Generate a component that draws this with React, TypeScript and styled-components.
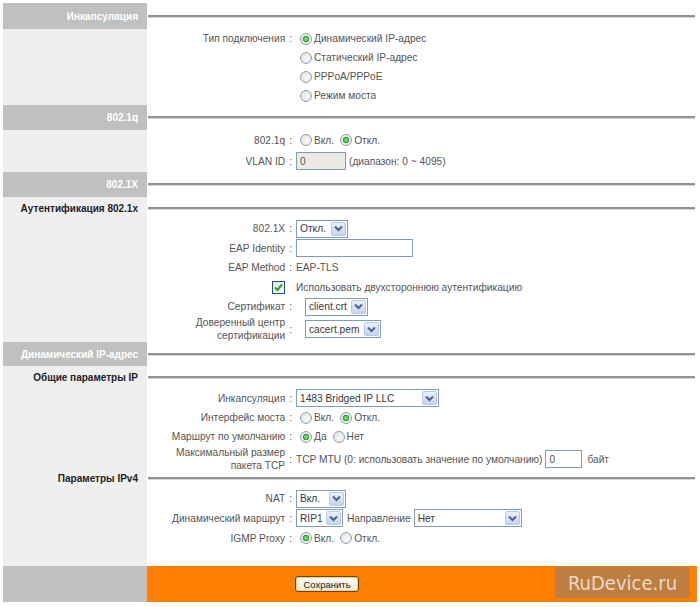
import React from "react";
import styled, { createGlobalStyle } from "styled-components";

const Global = createGlobalStyle`
  html, body { margin: 0; padding: 0; background: #ffffff; }
  body {
    font-family: "Liberation Sans", Arial, sans-serif;
    font-size: 10.2px;
    color: #555555;
  }
`;

const SIDE = 144;
const LABEL = 149;

const Page = styled.div`
  width: 694px;
  padding: 3px 3px 0 3px;
`;

const Header = styled.div<{ $h: number }>`
  display: grid;
  grid-template-columns: ${SIDE}px 1fr;
  height: ${(p) => p.$h}px;
`;

const HeaderTitle = styled.div<{ $dark?: boolean }>`
  background: ${(p) => (p.$dark ? "#c0c0c0" : "#efefef")};
  color: ${(p) => (p.$dark ? "#ffffff" : "#222222")};
  font-weight: bold;
  font-size: 10px;
  display: flex;
  align-items: center;
  justify-content: flex-end;
  padding-right: 9px;
`;

const Rule = styled.div`
  display: flex;
  align-items: center;
  padding: 0 2px 0 1px;
  &::after {
    content: "";
    flex: 1;
    border-top: 2px solid #939393;
    border-bottom: 1px solid #d6d6d6;
  }
`;

const Row = styled.div<{ $h: number }>`
  display: grid;
  grid-template-columns: ${SIDE}px ${LABEL}px 1fr;
  height: ${(p) => p.$h}px;
`;

const Side = styled.div`
  background: #efefef;
`;

const Label = styled.div`
  display: flex;
  align-items: center;
  justify-content: flex-end;
  padding-right: 4px;
  text-align: right;
  line-height: 13px;
  white-space: nowrap;
`;

const Colon = styled.span`
  margin-left: 4px;
`;

const Value = styled.div`
  display: flex;
  align-items: center;
  white-space: nowrap;
`;

const Text = styled.span<{ $ml?: number; $mr?: number }>`
  margin-left: ${(p) => p.$ml ?? 0}px;
  margin-right: ${(p) => p.$mr ?? 0}px;
`;

const RadioDot = styled.span<{ $on?: boolean }>`
  box-sizing: border-box;
  width: 12px;
  height: 12px;
  border-radius: 50%;
  border: 1px solid #8aa0bd;
  margin: 0 2px 0 4px;
  background: ${(p) =>
    p.$on
      ? "radial-gradient(circle, #6bd46b 0 1.5px, #2da52d 2.5px 3px, #f4f4f0 3.6px, #dcdcd6 100%)"
      : "radial-gradient(circle at 60% 60%, #f8f8f6 0%, #deded8 100%)"};
  flex: none;
`;

const Field = styled.span<{ $w: number; $disabled?: boolean; $ml?: number }>`
  box-sizing: border-box;
  display: inline-flex;
  align-items: center;
  width: ${(p) => p.$w}px;
  height: 18px;
  margin-left: ${(p) => p.$ml ?? 0}px;
  padding-left: 3px;
  border: 1px solid #7f9db9;
  background: ${(p) => (p.$disabled ? "#ebebe4" : "#ffffff")};
  color: #555;
`;

const SelectBox = styled.span<{ $w: number; $ml?: number }>`
  box-sizing: border-box;
  display: inline-flex;
  align-items: center;
  width: ${(p) => p.$w}px;
  height: 18px;
  margin-left: ${(p) => p.$ml ?? 0}px;
  padding: 1px;
  border: 1px solid #7f9db9;
  background: #ffffff;
  color: #3a3a3a;
`;

const SelectText = styled.span`
  flex: 1;
  padding-left: 2px;
  overflow: hidden;
`;

const SelectButton = styled.span`
  box-sizing: border-box;
  width: 15px;
  height: 14px;
  border: 1px solid #b6c8ee;
  border-radius: 2px;
  background: linear-gradient(#e9f0fd, #c3d4f5);
  display: flex;
  align-items: center;
  justify-content: center;
  flex: none;
`;

const CheckBox = styled.span`
  box-sizing: border-box;
  width: 13px;
  height: 13px;
  border: 1px solid #1c5180;
  background: linear-gradient(135deg, #e6e6e0, #fbfbf9);
  display: flex;
  align-items: center;
  justify-content: center;
  margin-right: 7px;
`;

const Footer = styled.div`
  display: grid;
  grid-template-columns: ${SIDE}px 1fr;
  height: 36px;
`;

const FooterSide = styled.div`
  background: #c0c0c0;
`;

const FooterMain = styled.div`
  position: relative;
  background: #ff7f00;
  display: flex;
  align-items: center;
  padding-left: 148px;
`;

const SaveButton = styled.button`
  box-sizing: border-box;
  height: 16px;
  width: 64px;
  padding: 0;
  border: 1px solid #5b4a28;
  border-radius: 3px;
  background: linear-gradient(#fffef8, #eee7cf);
  box-shadow: inset 0 0 0 1px #f5cf7f;
  font-family: "Liberation Sans", Arial, sans-serif;
  font-size: 9.5px;
  color: #1a1a1a;
`;

const Watermark = styled.div`
  position: absolute;
  right: 7px;
  top: 1px;
  width: 135px;
  height: 31px;
  background: rgba(125, 125, 125, 0.5);
  color: rgba(255, 255, 255, 0.72);
  font-family: "DejaVu Sans", sans-serif;
  font-stretch: condensed;
  font-size: 20px;
  display: flex;
  align-items: center;
  justify-content: center;
`;

const Chevron = () => (
  <svg width="9" height="7" viewBox="0 0 9 7">
    <path d="M1 1.5 L4.5 5 L8 1.5" fill="none" stroke="#4d6185" strokeWidth="2" />
  </svg>
);

const Tick = () => (
  <svg width="9" height="9" viewBox="0 0 9 9">
    <path d="M1 4.5 L3.5 7 L8 1.5" fill="none" stroke="#21a121" strokeWidth="2" />
  </svg>
);

const Select = ({ w, ml, children }: { w: number; ml?: number; children: React.ReactNode }) => (
  <SelectBox $w={w} $ml={ml}>
    <SelectText>{children}</SelectText>
    <SelectButton>
      <Chevron />
    </SelectButton>
  </SelectBox>
);

const Radio = ({ on, children }: { on?: boolean; children: React.ReactNode }) => (
  <>
    <RadioDot $on={on} />
    <Text $mr={2}>{children}</Text>
  </>
);

const SectionHeader = ({ title, h }: { title: string; h: number }) => (
  <Header $h={h}>
    <HeaderTitle $dark>{title}</HeaderTitle>
    <Rule />
  </Header>
);

const SubHeader = ({ title, h }: { title: string; h: number }) => (
  <Header $h={h}>
    <HeaderTitle>{title}</HeaderTitle>
    <Rule />
  </Header>
);

const FormRow = ({
  h,
  label,
  colon = true,
  children,
}: {
  h: number;
  label?: React.ReactNode;
  colon?: boolean;
  children?: React.ReactNode;
}) => (
  <Row $h={h}>
    <Side />
    <Label>
      {label}
      {label && colon ? <Colon>:</Colon> : null}
    </Label>
    <Value>{children}</Value>
  </Row>
);

export default function App() {
  return (
    <>
      <Global />
      <Page>
        <SectionHeader title="Инкапсуляция" h={26} />
        <FormRow h={19} label="Тип подключения">
          <Radio on>Динамический IP-адрес</Radio>
        </FormRow>
        <FormRow h={19}>
          <Radio>Статический IP-адрес</Radio>
        </FormRow>
        <FormRow h={19}>
          <Radio>PPPoA/PPPoE</Radio>
        </FormRow>
        <FormRow h={19}>
          <Radio>Режим моста</Radio>
        </FormRow>

        <SectionHeader title="802.1q" h={25} />
        <FormRow h={20} label="802.1q">
          <Radio>Вкл.</Radio>
          <Radio on>Откл.</Radio>
        </FormRow>
        <FormRow h={22} label="VLAN ID">
          <Field $w={50} $disabled>0</Field>
          <Text $ml={3}>(диапазон: 0 ~ 4095)</Text>
        </FormRow>

        <SectionHeader title="802.1X" h={25} />
        <SubHeader title="Аутентификация 802.1x" h={22} />
        <FormRow h={19} label="802.1X">
          <Select w={52}>Откл.</Select>
        </FormRow>
        <FormRow h={20} label="EAP Identity">
          <Field $w={117} />
        </FormRow>
        <FormRow h={19} label="EAP Method">
          <Text>EAP-TLS</Text>
        </FormRow>
        <FormRow
          h={20}
          colon={false}
          label={
            <CheckBox>
              <Tick />
            </CheckBox>
          }
        >
          <Text>Использовать двухстороннюю аутентификацию</Text>
        </FormRow>
        <FormRow h={19} label="Сертификат">
          <Select w={63} ml={9}>client.crt</Select>
        </FormRow>
        <FormRow
          h={26}
          label={
            <span>
              Доверенный центр
              <br />
              сертификации
            </span>
          }
        >
          <Select w={76} ml={9}>cacert.pem</Select>
        </FormRow>

        <SectionHeader title="Динамический IP-адрес" h={24} />
        <SubHeader title="Общие параметры IP" h={22} />
        <FormRow h={20} label="Инкапсуляция">
          <Select w={143}>1483 Bridged IP LLC</Select>
        </FormRow>
        <FormRow h={19} label="Интерфейс моста">
          <Radio>Вкл.</Radio>
          <Radio on>Откл.</Radio>
        </FormRow>
        <FormRow h={19} label="Маршрут по умолчанию">
          <Radio on>Да</Radio>
          <Radio>Нет</Radio>
        </FormRow>
        <FormRow
          h={22}
          label={
            <span>
              Максимальный размер
              <br />
              пакета TCP
            </span>
          }
        >
          <Text>TCP MTU (0: использовать значение по умолчанию)</Text>
          <Field $w={37} $ml={3}>0</Field>
          <Text $ml={5}>байт</Text>
        </FormRow>

        <SubHeader title="Параметры IPv4" h={21} />
        <FormRow h={19} label="NAT">
          <Select w={50}>Вкл.</Select>
        </FormRow>
        <FormRow h={20} label="Динамический маршрут">
          <Select w={47}>RIP1</Select>
          <Text $ml={4} $mr={3}>Направление</Text>
          <Select w={108}>Нет</Select>
        </FormRow>
        <FormRow h={20} label="IGMP Proxy">
          <Radio on>Вкл.</Radio>
          <Radio>Откл.</Radio>
        </FormRow>
        <FormRow h={18} />

        <Footer>
          <FooterSide />
          <FooterMain>
            <SaveButton>Сохранить</SaveButton>
            <Watermark>RuDevice.ru</Watermark>
          </FooterMain>
        </Footer>
      </Page>
    </>
  );
}
